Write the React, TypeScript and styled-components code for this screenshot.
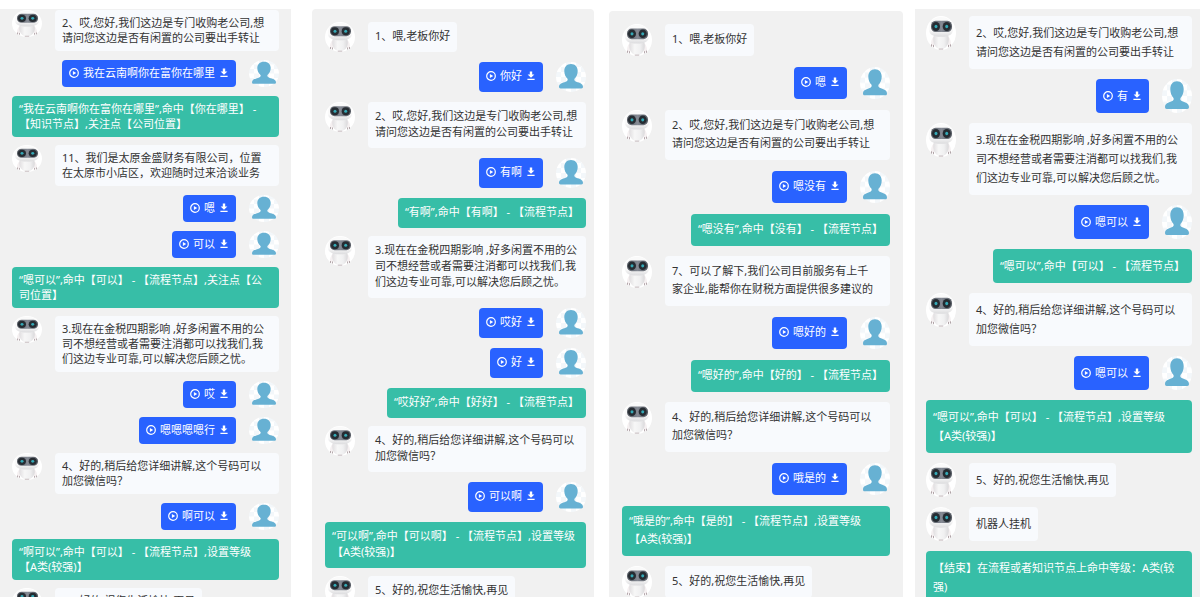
import React, { useId } from 'react';
import styled, { createGlobalStyle } from 'styled-components';

const GlobalStyle = createGlobalStyle`
  * { box-sizing: border-box; }
  html, body { margin: 0; padding: 0; background: #ffffff; }
  body {
    font-family: "Noto Sans", "Noto Sans CJK SC", sans-serif;
    font-size: 11px;
    text-spacing-trim: space-all;
  }
`;

type Kind = 'bot' | 'user' | 'note';
type Message = { kind: Kind; lines: string[] };

type Metrics = {
  marginTop: number;
  marginLeft: number;
  radius: number;
  padding: string;
  line: number;
  padTop: number;
  padBottom: number;
  avatar: number;
  gap: number;
  noteGap: number;
};

const Page = styled.main`
  display: grid;
  grid-template-columns: 291fr 303fr 309fr 297fr;
  grid-template-rows: minmax(0, 1fr);
  height: 100vh;
  padding-top: 9px;
  overflow: hidden;
`;

const Panel = styled.ol<{ $m: Metrics }>`
  min-width: 0;
  display: flex;
  flex-direction: column;
  list-style: none;
  margin: ${p => p.$m.marginTop}px 0 0 ${p => p.$m.marginLeft}px;
  padding: ${p => p.$m.padding};
  border-radius: ${p => p.$m.radius}px ${p => p.$m.radius}px 0 0;
  background: #f1f1f1;
  line-height: ${p => p.$m.line}px;
  overflow: hidden;
`;

const Row = styled.li<{ $m: Metrics; $kind: Kind }>`
  flex: none;
  display: flex;
  gap: 13px;
  align-items: flex-start;
  justify-content: ${p => (p.$kind === 'bot' ? 'flex-start' : 'flex-end')};
  margin-bottom: ${p => (p.$kind === 'note' ? p.$m.noteGap : p.$m.gap)}px;
`;

const Bubble = styled.div<{ $m: Metrics; $wide?: boolean }>`
  flex: ${p => (p.$wide ? '1 1 0' : 'none')};
  min-width: 0;
  min-height: ${p => p.$m.avatar}px;
  padding: ${p => p.$m.padTop}px 7px ${p => p.$m.padBottom}px;
  border-radius: 4px;
  white-space: nowrap;
`;

const BotBubble = styled(Bubble)`
  background: #f8fafd;
  color: #333333;
`;

const NoteBubble = styled(Bubble)`
  min-height: 0;
  background: #37bea7;
  color: #ffffff;
`;

const UserBubble = styled(Bubble)`
  display: flex;
  align-items: flex-start;
  gap: 4px;
  background: #2962ff;
  color: #ffffff;
`;

const IconButton = styled.button<{ $line: number }>`
  display: flex;
  align-items: center;
  justify-content: center;
  width: 10px;
  height: ${p => p.$line}px;
  padding: 0;
  border: 0;
  background: none;
  color: inherit;
  cursor: pointer;
`;

const AvatarSvg = styled.svg<{ $h: number }>`
  flex: none;
  display: block;
  width: 30px;
  height: ${p => p.$h}px;
`;

function PlayIcon() {
  return (
    <svg width="10" height="10" viewBox="0 0 10 10" aria-hidden="true">
      <circle cx="5" cy="5" r="4.3" fill="none" stroke="currentColor" strokeWidth="1.2" />
      <path d="M3.9 2.9 7.2 5 3.9 7.1Z" fill="currentColor" />
    </svg>
  );
}

function DownloadIcon() {
  return (
    <svg width="10" height="10" viewBox="0 0 10 10" aria-hidden="true">
      <path d="M3.8.6h2.4v2.800h2.200L5 6.800 1.600 3.400h2.200ZM1.400 7.700h7.200v1.400H1.400Z" fill="currentColor" />
    </svg>
  );
}

function RobotAvatar({ height }: { height: number }) {
  const id = useId();
  return (
    <AvatarSvg $h={height} viewBox="0 0 30 30" preserveAspectRatio="none" role="img" aria-label="机器人">
      <defs>
        <linearGradient id={`${id}v`} x1="0" x2="1" y1="0" y2="0">
          <stop offset="0" stopColor="#565b63" />
          <stop offset="0.5" stopColor="#858a94" />
          <stop offset="1" stopColor="#565b63" />
        </linearGradient>
        <linearGradient id={`${id}h`} x1="0" x2="0" y1="0" y2="1">
          <stop offset="0.65" stopColor="#fafafa" />
          <stop offset="1" stopColor="#dcdcde" />
        </linearGradient>
        <linearGradient id={`${id}b`} x1="0" x2="1" y1="0" y2="0">
          <stop offset="0" stopColor="#e0dee0" />
          <stop offset="0.35" stopColor="#f7f7f7" />
          <stop offset="0.7" stopColor="#f0f0f1" />
          <stop offset="1" stopColor="#dad9db" />
        </linearGradient>
      </defs>
      <ellipse cx="15" cy="15" rx="15" ry="15" fill="#ffffff" />
      <path d="M7.500 18C5.500 20 4.700 23 5 26.500h3l1-6ZM22.500 18c2 2 2.800 5 2.500 8.500h-3l-1-6Z" fill="#f5f0f1" />
      <path d="M8 16.500h14c1.500 4 .8 8.400-2.200 11-2.800 2.300-6.800 2.300-9.600 0C7.200 24.900 6.500 20.500 8 16.500Z" fill={`url(#${id}b)`} />
      <path d="M12.800 29.200h4.400" stroke="#b9aaae" strokeWidth=".8" />
      <path d="M15 .8c7 0 11.800 3.500 12.200 9.700.2 5.200-3.400 7.800-12.200 7.800S2.600 15.700 2.800 10.500C3.200 4.300 8 .8 15 .8Z" fill={`url(#${id}h)`} />
      <rect x="5" y="4.200" width="21" height="10" rx="4.600" fill={`url(#${id}v)`} />
      <circle cx="10" cy="9.200" r="4" fill="#262c32" />
      <circle cx="20.700" cy="9.200" r="4" fill="#262c32" />
      <circle cx="10" cy="9.200" r="1.500" fill="#35a9b6" />
      <circle cx="20.700" cy="9.200" r="1.500" fill="#35a9b6" />
      <path d="M5.500 25v2M7.500 25.500v2M24.500 25v2M22.500 25.500v2" stroke="#a5979b" strokeWidth=".8" />
    </AvatarSvg>
  );
}

function PersonAvatar({ height }: { height: number }) {
  const id = useId();
  return (
    <AvatarSvg $h={height} viewBox="0 0 30 30" preserveAspectRatio="none" role="img" aria-label="客户">
      <defs>
        <pattern id={`${id}c`} width="10" height="10" patternUnits="userSpaceOnUse">
          <rect width="10" height="10" fill="#ffffff" />
          <path d="M0 0h5v5H0ZM5 5h5v5H5Z" fill="#f3f7fa" />
        </pattern>
      </defs>
      <ellipse cx="15" cy="15" rx="15" ry="15" fill={`url(#${id}c)`} />
      <path
        d="M15 2c4.200 0 6.700 2.800 6.700 7 0 3.200-1.300 6-3.200 7.700-.6 1.500.2 2.400 1.800 3 3.400 1.200 6.700 1.900 6.700 5.100 0 1.200-.6 1.700-1.700 1.700H4.700C3.600 26.500 3 26 3 24.800c0-3.200 3.300-3.900 6.700-5.100 1.600-.6 2.400-1.500 1.800-3C9.600 15 8.300 12.200 8.300 9c0-4.200 2.500-7 6.700-7Z"
        fill="#67b1d3"
      />
    </AvatarSvg>
  );
}

function Lines({ lines }: { lines: string[] }) {
  return (
    <>
      {lines.map((line, i) => (
        <React.Fragment key={i}>
          {i > 0 && <br />}
          {line}
        </React.Fragment>
      ))}
    </>
  );
}

function MessageRow({ message, m }: { message: Message; m: Metrics }) {
  const { kind, lines } = message;
  const wide = lines.length > 1;
  return (
    <Row $m={m} $kind={kind}>
      {kind === 'bot' && (
        <>
          <RobotAvatar height={m.avatar} />
          <BotBubble $m={m} $wide={wide}><Lines lines={lines} /></BotBubble>
        </>
      )}
      {kind === 'note' && (
        <NoteBubble $m={m} $wide={wide}><Lines lines={lines} /></NoteBubble>
      )}
      {kind === 'user' && (
        <>
          <UserBubble $m={m}>
            <IconButton type="button" aria-label="播放" $line={m.line}><PlayIcon /></IconButton>
            <span>{lines[0]}</span>
            <IconButton type="button" aria-label="下载" $line={m.line}><DownloadIcon /></IconButton>
          </UserBubble>
          <PersonAvatar height={m.avatar} />
        </>
      )}
    </Row>
  );
}

const bot = (...lines: string[]): Message => ({ kind: 'bot', lines });
const user = (text: string): Message => ({ kind: 'user', lines: [text] });
const note = (...lines: string[]): Message => ({ kind: 'note', lines });

const greeting = bot('1、喂,老板你好');
const offer = bot('2、哎,您好,我们这边是专门收购老公司,想', '请问您这边是否有闲置的公司要出手转让');
const pitch = bot(
  '3.现在在金税四期影响 ,好多闲置不用的公',
  '司不想经营或者需要注消都可以找我们,我',
  '们这边专业可靠,可以解决您后顾之忧。',
);
const wechat = bot('4、好的,稍后给您详细讲解,这个号码可以', '加您微信吗？');
const goodbye = bot('5、好的,祝您生活愉快,再见');

const conversations: { metrics: Metrics; messages: Message[] }[] = [
  {
    metrics: {
      marginTop: 0, marginLeft: 0, radius: 0, padding: '1px 12px 0',
      line: 15, padTop: 5, padBottom: 6, avatar: 27, gap: 9, noteGap: 8,
    },
    messages: [
      offer,
      user('我在云南啊你在富你在哪里'),
      note('“我在云南啊你在富你在哪里”,命中【你在哪里】 -', '【知识节点】,关注点【公司位置】'),
      bot('11、我们是太原金盛财务有限公司，位置', '在太原市小店区，欢迎随时过来洽谈业务'),
      user('嗯'),
      user('可以'),
      note('“嗯可以”,命中【可以】 - 【流程节点】,关注点【公', '司位置】'),
      pitch,
      user('哎'),
      user('嗯嗯嗯嗯行'),
      wechat,
      user('啊可以'),
      note('“啊可以”,命中【可以】 - 【流程节点】,设置等级', '【A类(较强)】'),
      goodbye,
    ],
  },
  {
    metrics: {
      marginTop: 0, marginLeft: 21, radius: 4, padding: '13px 8px 0 13px',
      line: 16, padTop: 6, padBottom: 8, avatar: 30, gap: 10, noteGap: 8,
    },
    messages: [
      greeting,
      user('你好'),
      offer,
      user('有啊'),
      note('“有啊”,命中【有啊】 - 【流程节点】'),
      pitch,
      user('哎好'),
      user('好'),
      note('“哎好好”,命中【好好】 - 【流程节点】'),
      wechat,
      user('可以啊'),
      note('“可以啊”,命中【可以啊】 - 【流程节点】,设置等级', '【A类(较强)】'),
      goodbye,
    ],
  },
  {
    metrics: {
      marginTop: 2, marginLeft: 15, radius: 4, padding: '13px 13px 0',
      line: 18, padTop: 6, padBottom: 8, avatar: 32, gap: 11, noteGap: 10,
    },
    messages: [
      greeting,
      user('嗯'),
      offer,
      user('嗯没有'),
      note('“嗯没有”,命中【没有】 - 【流程节点】'),
      bot('7、可以了解下,我们公司目前服务有上千', '家企业,能帮你在财税方面提供很多建议的'),
      user('嗯好的'),
      note('“嗯好的”,命中【好的】 - 【流程节点】'),
      wechat,
      user('哦是的'),
      note('“哦是的”,命中【是的】 - 【流程节点】,设置等级', '【A类(较强)】'),
      goodbye,
    ],
  },
  {
    metrics: {
      marginTop: 0, marginLeft: 12, radius: 0, padding: '7px 8px 0 11px',
      line: 19, padTop: 7, padBottom: 8, avatar: 34, gap: 10, noteGap: 10,
    },
    messages: [
      offer,
      user('有'),
      pitch,
      user('嗯可以'),
      note('“嗯可以”,命中【可以】 - 【流程节点】'),
      wechat,
      user('嗯可以'),
      note('“嗯可以”,命中【可以】 - 【流程节点】,设置等级', '【A类(较强)】'),
      goodbye,
      bot('机器人挂机'),
      note('【结束】在流程或者知识节点上命中等级：A类(较', '强)'),
    ],
  },
];

export default function App() {
  return (
    <>
      <GlobalStyle />
      <Page>
        {conversations.map(({ metrics, messages }, i) => (
          <Panel key={i} $m={metrics}>
            {messages.map((message, j) => (
              <MessageRow key={j} message={message} m={metrics} />
            ))}
          </Panel>
        ))}
      </Page>
    </>
  );
}
